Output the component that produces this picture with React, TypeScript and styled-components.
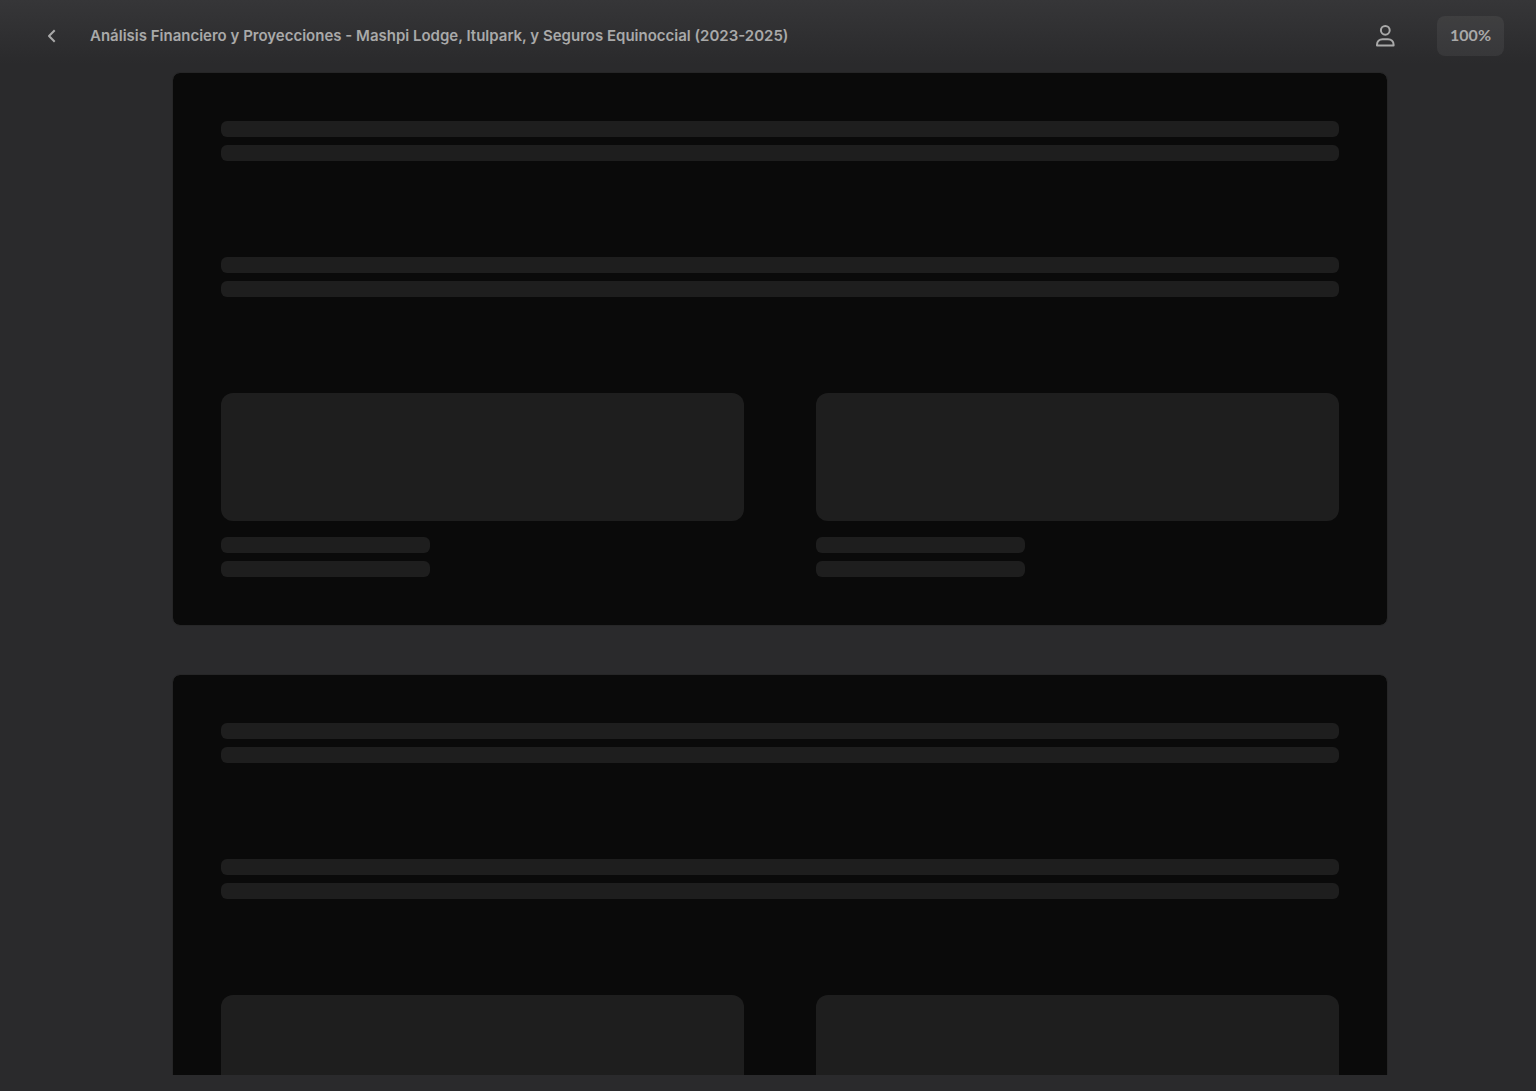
import React from "react";
import styled, { createGlobalStyle } from "styled-components";

const GlobalStyle = createGlobalStyle`
  *, *::before, *::after { box-sizing: border-box; }
  body {
    margin: 0;
    background: #2a2a2c;
    color: #a9a9a9;
    font-family: Inter, "Liberation Sans", Arial, sans-serif;
  }
`;

const Page = styled.div`
  display: flex;
  flex-direction: column;
  height: 100vh;
  padding-bottom: 16px;
  background: linear-gradient(#363638 0, #2a2a2c 64px);
`;

const Header = styled.header`
  display: flex;
  align-items: center;
  flex: none;
  height: 72px;
  padding: 0 32px;
`;

const IconButton = styled.button`
  display: flex;
  align-items: center;
  justify-content: center;
  flex: none;
  width: 40px;
  height: 40px;
  padding: 0;
  border: 0;
  border-radius: 8px;
  background: transparent;
  color: inherit;
  cursor: pointer;
`;

const Title = styled.h1`
  flex: 1;
  min-width: 0;
  margin: 0;
  padding-left: 18px;
  overflow: hidden;
  font-size: 15px;
  font-weight: 600;
  line-height: 24px;
  white-space: nowrap;
  text-overflow: ellipsis;
`;

const Actions = styled.div`
  display: flex;
  align-items: center;
  gap: 32px;
`;

const ZoomButton = styled.button`
  height: 40px;
  padding: 0 13px 2px;
  border: 0;
  border-radius: 8px;
  background: rgba(255, 255, 255, 0.06);
  color: inherit;
  font-family: Lato, sans-serif;
  font-size: 16px;
  font-weight: 700;
  line-height: 24px;
  cursor: pointer;
`;

const Main = styled.main`
  flex: 1;
  min-height: 0;
  overflow-y: auto;
  scrollbar-width: none;
  padding-left: 24px;
`;

const Pages = styled.div`
  display: grid;
  gap: 48px;
  max-width: 1216px;
  margin: 0 auto;
`;

const Card = styled.section`
  display: grid;
  gap: 96px;
  padding: 48px;
  border: 1px solid #262627;
  border-radius: 8px;
  background: #0a0a0a;
  background-clip: padding-box;
`;

const Lines = styled.div`
  display: grid;
  gap: 8px;
`;

const Line = styled.div<{ $short?: boolean }>`
  width: ${(p) => (p.$short ? "40%" : "100%")};
  height: 16px;
  border-radius: 6px;
  background: #1e1e1e;
`;

const Columns = styled.div`
  display: grid;
  grid-template-columns: 1fr 1fr;
  gap: 72px;
`;

const Column = styled.div`
  display: grid;
  gap: 16px;
`;

const Block = styled.div`
  height: 128px;
  border-radius: 12px;
  background: #1e1e1e;
`;

function TextSkeleton({ short }: { short?: boolean }) {
  return (
    <Lines>
      <Line $short={short} />
      <Line $short={short} />
    </Lines>
  );
}

function PageSkeleton() {
  return (
    <Card aria-busy="true">
      <TextSkeleton />
      <TextSkeleton />
      <Columns>
        {[0, 1].map((i) => (
          <Column key={i}>
            <Block />
            <TextSkeleton short />
          </Column>
        ))}
      </Columns>
    </Card>
  );
}

export default function App() {
  return (
    <>
      <GlobalStyle />
      <Page>
        <Header>
          <IconButton type="button" aria-label="Volver">
            <svg width="16" height="16" viewBox="0 0 16 16" fill="none" stroke="currentColor" strokeWidth="2">
              <path d="M10.700 2.300 5 8l5.700 5.700" strokeLinejoin="round" />
            </svg>
          </IconButton>
          <Title>
            Análisis Financiero y Proyecciones - Mashpi Lodge, Itulpark, y Seguros Equinoccial (2023-2025)
          </Title>
          <Actions>
            <IconButton type="button" aria-label="Cuenta">
              <svg width="24" height="24" viewBox="0 0 24 24" fill="none" stroke="currentColor" strokeWidth="2">
                <circle cx="12.300" cy="6.300" r="4.400" />
                <path d="M4 21.500h16.600v-.8c0-3.200-2.300-5.500-5.600-5.500H9.600c-3.300 0-5.600 2.300-5.600 5.500z" strokeLinejoin="round" />
              </svg>
            </IconButton>
            <ZoomButton type="button">100%</ZoomButton>
          </Actions>
        </Header>
        <Main>
          <Pages>
            <PageSkeleton />
            <PageSkeleton />
          </Pages>
        </Main>
      </Page>
    </>
  );
}
